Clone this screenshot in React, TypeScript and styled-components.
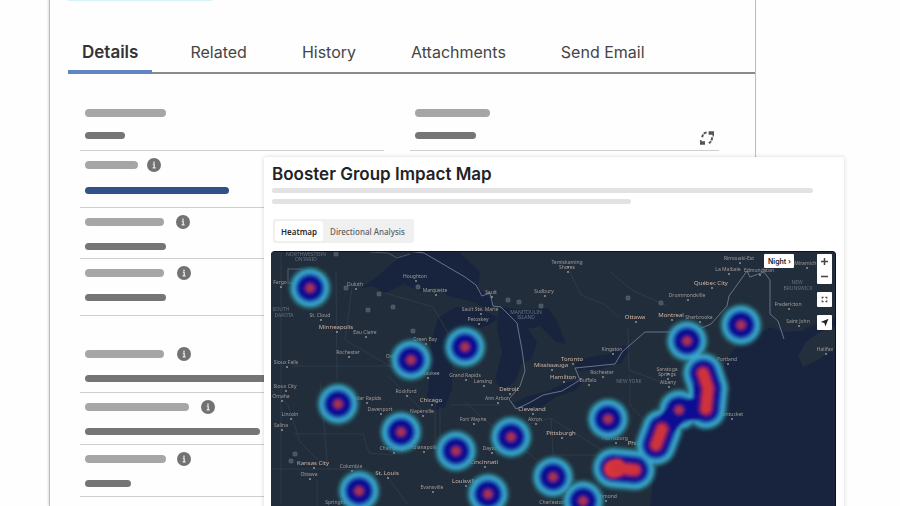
import React from "react";
import styled, { createGlobalStyle } from "styled-components";

const GlobalStyle = createGlobalStyle`
  * { box-sizing: border-box; }
  body {
    margin: 0;
    background: #fefefe;
    font-family: Inter, "Liberation Sans", sans-serif;
    color: #3a3a3c;
  }
  button, select { font-family: inherit; margin: 0; }
`;

const Stage = styled.main`
  position: relative;
  height: 100vh;
  min-height: 500px;
  overflow: hidden;
`;

const RecordCard = styled.section`
  margin: 0 144px 0 49px;
  min-height: 100%;
  background: #fefefe;
  border: solid #bdbdbd;
  border-width: 0 1px;
  box-shadow: -1px 0 2px rgba(0, 0, 0, 0.12);
`;

const RecordHeader = styled.div`
  height: 29px;
  padding-left: 18px;
`;

const HeaderAccent = styled.div`
  width: 144px;
  height: 1px;
  background: #d6f1f8;
`;

const Tabs = styled.nav`
  display: flex;
  gap: 21px;
  margin-left: 18px;
  border-bottom: 2px solid #8b8b8b;
`;

const Tab = styled.button<{ $active?: boolean }>`
  height: 45px;
  margin-bottom: -2px;
  padding: 4px ${(p) => (p.$active ? 14 : 17)}px 0;
  border: 0;
  border-bottom: 4px solid ${(p) => (p.$active ? "#5f86c2" : "transparent")};
  background: none;
  color: ${(p) => (p.$active ? "#333335" : "#454547")};
  font-size: ${(p) => (p.$active ? 17 : 16)}px;
  line-height: 24px;
  font-weight: ${(p) => (p.$active ? 600 : 400)};
  white-space: nowrap;
`;

const Columns = styled.div`
  display: grid;
  grid-template-columns: 304fr 309fr;
  gap: 26px;
  padding: 0 36px 0 30px;
`;

const Column = styled.div`
  min-width: 0;
`;

const FieldBox = styled.div<{ $top: number; $bottom: number }>`
  position: relative;
  display: flex;
  flex-direction: column;
  padding: ${(p) => p.$top}px 0 ${(p) => p.$bottom}px 5px;
  border-bottom: 1px solid #cfcfcf;
`;

const LabelRow = styled.div<{ $gap: number }>`
  display: flex;
  align-items: center;
  height: 14px;
  margin-bottom: ${(p) => p.$gap}px;
`;

const LabelBar = styled.span<{ $w: number }>`
  width: ${(p) => p.$w}px;
  height: 8px;
  border-radius: 4px;
  background: #a6a6a6;
`;

const ValueBar = styled.span<{ $w: number; $link?: boolean }>`
  width: ${(p) => p.$w}px;
  height: 7px;
  border-radius: 4px;
  background: ${(p) => (p.$link ? "#2f5389" : "#757575")};
`;

const InfoSvg = styled.svg<{ $space: number }>`
  width: 14px;
  height: 14px;
  margin-left: ${(p) => p.$space}px;
`;

const SwapSvg = styled.svg`
  position: absolute;
  right: 4px;
  bottom: 4px;
  width: 16px;
  height: 16px;
`;

const MapCard = styled.section`
  position: absolute;
  top: 157px;
  left: 264px;
  right: 56px;
  padding: 6px 8px 0 7px;
  background: #fff;
  border-radius: 3px;
  box-shadow: 0 0 4px rgba(0, 0, 0, 0.16);
`;

const MapTitle = styled.h2`
  margin: 0 0 3px;
  padding-left: 1px;
  color: #232325;
  font-size: 17px;
  line-height: 22px;
  font-weight: 600;
`;

const TextLine = styled.div<{ $w: string }>`
  width: ${(p) => p.$w};
  height: 5px;
  margin: 0 0 6px 1px;
  border-radius: 3px;
  background: #e2e2e4;
`;

const Segmented = styled.div`
  display: inline-flex;
  height: 24px;
  margin: 9px 0 8px 2px;
  padding: 2px;
  border-radius: 3px;
  background: #f0f0f1;
`;

const Segment = styled.button<{ $active?: boolean }>`
  padding: 0 ${(p) => (p.$active ? 6 : 7)}px;
  border: 0;
  border-radius: 3px;
  background: ${(p) => (p.$active ? "#fff" : "transparent")};
  color: ${(p) => (p.$active ? "#29292b" : "#5c5c60")};
  font-family: "Noto Sans", sans-serif;
  font-size: 8px;
  font-weight: ${(p) => (p.$active ? 600 : 500)};
  white-space: nowrap;
`;

const MapFrame = styled.div`
  position: relative;
  height: 360px;
  border: solid #0c121c;
  border-width: 1px 1px 0 0;
  border-radius: 4px;
  background: #222d3b;
  overflow: hidden;
`;

const MapSvg = styled.svg`
  display: block;
  width: 100%;
  height: 100%;
`;

const MapControls = styled.div`
  position: absolute;
  top: 2px;
  right: 3px;
  display: flex;
  align-items: flex-start;
  gap: 23px;
`;

const ThemeSelect = styled.select`
  appearance: none;
  width: 30px;
  height: 14px;
  padding: 0 0 0 4px;
  border: 0;
  border-radius: 1px;
  background: #fff;
  color: #222;
  font-size: 7px;
  font-weight: 600;
`;

const ControlStack = styled.div`
  display: flex;
  flex-direction: column;
  gap: 8px;
`;

const ControlGroup = styled.div`
  display: flex;
  flex-direction: column;
  border-radius: 1px;
  background: #fff;
`;

const ControlButton = styled.button`
  display: grid;
  place-items: center;
  width: 15px;
  height: 15px;
  padding: 0;
  border: 0;
  background: none;
`;

type FieldProps = {
  label: number;
  value: number;
  info?: number;
  link?: boolean;
  top?: number;
  gap?: number;
  bottom?: number;
  children?: React.ReactNode;
};

function InfoIcon({ space }: { space: number }) {
  return (
    <InfoSvg $space={space} viewBox="0 0 14 14" aria-label="Info">
      <circle cx="7" cy="7" r="7" fill="#727272" />
      <path d="M7 3.6v1.4M5.8 6.1h1.4v3.6M5.6 9.8h3" stroke="#eaeaea" strokeWidth="1.3" fill="none" />
    </InfoSvg>
  );
}

function Field({ label, value, info, link, top = 7, gap = 14, bottom = 9, children }: FieldProps) {
  return (
    <FieldBox $top={top} $bottom={bottom}>
      <LabelRow $gap={gap}>
        <LabelBar $w={label} />
        {info !== undefined && <InfoIcon space={info} />}
      </LabelRow>
      <ValueBar $w={value} $link={link} />
      {children}
    </FieldBox>
  );
}

type Place = [string, number, number, number?];

const CITIES: Place[] = [
  ["Minneapolis", 336, 329, 1], ["Kansas City", 313, 465, 1], ["Chicago", 431, 402, 1],
  ["St. Louis", 387, 475, 1], ["Louisville", 465, 483, 1], ["Cincinnati", 484, 464, 1],
  ["Cleveland", 532, 411, 1], ["Pittsburgh", 561, 435, 1], ["Toronto", 572, 361, 1],
  ["Mississauga", 551, 367, 1], ["Ottawa", 635, 319, 1], ["Montreal", 671, 317, 1],
  ["Québec City", 711, 285, 1], ["Detroit", 509, 391, 1], ["Hamilton", 563, 379, 1],
  ["Philadelphia", 645, 445, 1], ["Duluth", 355, 286], ["Houghton", 415, 278],
  ["Marquette", 435, 292], ["St. Cloud", 320, 317], ["Eau Claire", 365, 334],
  ["Rochester", 348, 354], ["Green Bay", 425, 341], ["Sioux Falls", 286, 364],
  ["Fargo", 280, 284], ["Oshkosh", 396, 358], ["Milwaukee", 427, 375],
  ["Grand Rapids", 465, 377], ["Temiskaming", 567, 264], ["Shores", 567, 269],
  ["Sudbury", 544, 293], ["Sault", 491, 294], ["Sault Ste. Marie", 480, 311],
  ["Petoskey", 478, 321], ["Kingston", 612, 351], ["Rochester", 602, 374],
  ["Rimouski-Est", 739, 260], ["La Malbaie", 728, 271], ["Edmundston", 759, 272],
  ["Drummondville", 687, 297], ["Sherbrooke", 699, 319], ["Miramichi", 806, 265],
  ["Fredericton", 788, 306], ["Saint John", 798, 323], ["Halifax", 825, 351],
  ["Portland", 727, 361], ["Saratoga", 667, 371], ["Springs", 667, 376],
  ["Sioux City", 285, 388], ["Omaha", 281, 398], ["Lincoln", 290, 416],
  ["Salina", 281, 427], ["Ottawa", 309, 476], ["Columbia", 351, 468],
  ["Springfield", 338, 504], ["Cedar Rapids", 366, 400], ["Davenport", 380, 411],
  ["Rockford", 406, 393], ["Naperville", 422, 413], ["Champaign", 393, 450],
  ["Indianapolis", 423, 449], ["Evansville", 432, 489], ["Lansing", 483, 383],
  ["Ann Arbor", 497, 400], ["Akron", 535, 421], ["Fort Wayne", 473, 421],
  ["Buffalo", 588, 382], ["Dayton", 491, 450], ["Harrisburg", 615, 440],
  ["Richmond", 605, 498], ["Charleston", 552, 504], ["Nantucket", 731, 416],
  ["Albany", 668, 384],
];

const REGIONS: Place[] = [
  ["NORTHWESTERN", 306, 256], ["ONTARIO", 306, 261], ["SOUTH", 281, 311],
  ["DAKOTA", 284, 317], ["NEW", 797, 284], ["BRUNSWICK", 798, 290],
  ["NEW YORK", 629, 383], ["MANITOULIN", 526, 314], ["ISLAND", 526, 319],
];

const SHIELDS = [
  [346, 288], [379, 294], [393, 307], [368, 310], [413, 331], [508, 300], [519, 302],
  [541, 306], [628, 298], [418, 287], [661, 303], [295, 454], [291, 461], [336, 254],
];

const SPOTS = [
  [310, 288], [411, 360], [465, 347], [338, 404], [401, 432], [456, 451], [511, 437],
  [553, 477], [583, 501], [359, 491], [488, 494], [608, 419], [687, 341], [741, 325],
  [679, 410],
];
const SPOT_PATH = SPOTS.map(([x, y]) => `M${x} ${y}h0.1`).join("");
const COAST_PATH = "M703 373L708 388L706 409M662 429L656 445M613 468L635 470";

const HALO: [string, number, number][] = [
  ["#237c8b", 43, 0.65],
  ["#3ba4c8", 37, 1],
  ["#216fb9", 30, 1],
  ["#0d1193", 25, 1],
];

function MapDrawing() {
  return (
    <MapSvg viewBox="271 252 564 360" preserveAspectRatio="xMidYMin slice" role="img" aria-label="Heatmap of group impact">
      <defs>
        <filter id="soft" x="-10%" y="-10%" width="120%" height="120%"><feGaussianBlur stdDeviation="1.4" /></filter>
        <filter id="haze"><feGaussianBlur stdDeviation="0.35" /></filter>
      </defs>
      <rect x="271" y="250" width="566" height="362" fill="#222d3b" />
      <g fill="#18243e">
        <path d="M836 318L822 321L801 331L783 332L770 327L757 336L742 341L732 351L724 365L722 379L731 389L720 399L700 408L687 423L674 439L668 461L654 470L650 506L640 612H836Z" />
        <path d="M360 289L378 276L398 258L420 251H458L480 272L478 288L494 300L490 310L470 301L448 296L438 287L421 292L404 284L386 293L372 286Z" />
        <path d="M430 376L431 343L438 318L456 307L482 310L499 318L489 325L470 331L459 345L452 362L452 389L445 407L434 411L427 397Z" />
        <path d="M499 307L529 310L548 308L558 323L566 344L556 342L540 326L528 329L537 342L532 358L521 365L515 382L502 390L495 380L502 352L497 329Z" />
        <path d="M514 403L528 396L548 391L567 382L584 380L576 390L556 397L540 408L521 410Z" />
        <path d="M574 364L586 358L610 354L625 345L630 350L621 363L600 369L580 371Z" />
      </g>
      <path d="M798 356L806 342L818 333L836 326V348L814 362L803 367Z" fill="#232f3d" />
      <g fill="none" stroke="#35414f" strokeWidth="0.7">
        <path d="M281 251V505M336 270L337 380M352 288L345 340L378 359L410 378M292 366H400M271 390L288 405L300 442L318 460M294 434H363L369 453L393 455M271 469H340L386 475L408 505M435 397V450L467 460M450 405H500M440 406V455M320 382L328 469M569 270L581 295L604 304L619 318M610 272L632 290L667 306M465 402L500 433L550 418L612 456M511 437L547 470L590 485M551 418L553 455H632M630 375V405L648 424M628 328L629 370L667 384M698 332L704 370M385 293L433 307L455 345M317 480V506M388 376L422 410" />
      </g>
      <g fill="none" stroke="#6d7c92" strokeWidth="0.9">
        <path d="M408 251L424 253L465 277L476 285L482 296L490 293L493 306L501 307L517 323L522 350L525 371L520 386L509 399L516 409L529 403L543 395L562 391L580 380L575 368L615 364L622 352L645 332H692L711 324L727 306L729 296L747 271L750 277L764 272L770 280V314L778 321L784 339" />
        <path d="M370 252L388 253L397 258L410 254" opacity="0.6" />
      </g>
      <g fontFamily="Noto Sans, sans-serif" textAnchor="middle" filter="url(#haze)">
        {CITIES.map(([name, x, y, major], i) => (
          <g key={i} fill={major ? "#cdb4a5" : "#a09a98"}>
            <text x={x} y={y} fontSize={major ? 6 : 5}>{name}</text>
            <circle cx={x + 1} cy={y + 3} r="0.8" fill="#dedad6" />
          </g>
        ))}
        {REGIONS.map(([name, x, y], i) => (
          <text key={i} x={x} y={y} fontSize="5" fill="#667180">{name}</text>
        ))}
        {SHIELDS.map(([x, y], i) => (
          <rect key={i} x={x - 2} y={y - 2} width="4" height="4" rx="1" fill="#46535f" stroke="#657382" strokeWidth="0.5" />
        ))}
      </g>
      <rect x="288" y="269" width="14" height="14" fill="none" stroke="#526170" />
      <g fill="none" strokeLinecap="round" strokeLinejoin="round" filter="url(#soft)">
        {HALO.map(([color, width, opacity]) => (
          <path key={width} d={SPOT_PATH + COAST_PATH} stroke={color} strokeWidth={width} opacity={opacity} />
        ))}
        <path d="M704 388L706 409L679 410L661 431" stroke="#0d1193" strokeWidth="22" />
        <path d={SPOT_PATH} stroke="#371582" strokeWidth="13" />
        <path d={SPOT_PATH} stroke="#a8304f" strokeWidth="8" />
        <path d={COAST_PATH} stroke="#621570" strokeWidth="16" />
        <path d={COAST_PATH} stroke="#cf323a" strokeWidth="10" />
        <path d="M613 469L617 468" stroke="#621570" strokeWidth="21" />
        <path d="M613 469L617 468" stroke="#d6353b" strokeWidth="17" />
        <path d="M617 468L635 470" stroke="#cf323a" strokeWidth="10" />
      </g>
    </MapSvg>
  );
}

export default function App() {
  return (
    <>
      <GlobalStyle />
      <Stage>
        <RecordCard>
          <RecordHeader><HeaderAccent /></RecordHeader>
          <Tabs aria-label="Record sections">
            <Tab $active aria-current="page">Details</Tab>
            <Tab>Related</Tab>
            <Tab>History</Tab>
            <Tab>Attachments</Tab>
            <Tab>Send Email</Tab>
          </Tabs>
          <Columns>
            <Column>
              <Field label={81} value={40} top={32} gap={12} bottom={11} />
              <Field label={53} value={144} info={9} link gap={15} bottom={13} />
              <Field label={79} value={81} info={12} bottom={8} />
              <Field label={79} value={81} info={13} bottom={14} />
              <Field label={79} value={200} info={13} top={31} bottom={10} />
              <Field label={104} value={175} info={12} />
              <Field label={81} value={46} info={11} />
            </Column>
            <Column>
              <Field label={75} value={61} top={32} gap={12} bottom={11}>
                <SwapSvg viewBox="0 0 16 16" fill="none" stroke="#555" aria-hidden="true">
                  <path d="M7.6 2.6C4.8 3 3.4 4.6 3 8.4" strokeWidth="2" strokeDasharray="3 1" />
                  <path d="M13.2 7.4C12.8 10.6 11.6 12.6 9 13.6" strokeWidth="2" strokeDasharray="3 1" />
                  <path d="M9.6 3H15M1 13H6" strokeWidth="3.4" />
                  <path d="M14.2 3V6.4M1.8 10V13" strokeWidth="1.4" />
                </SwapSvg>
              </Field>
            </Column>
          </Columns>
        </RecordCard>

        <MapCard>
          <MapTitle>Booster Group Impact Map</MapTitle>
          <TextLine $w="calc(100% - 24px)" />
          <TextLine $w="calc(64% - 3px)" />
          <Segmented>
            <Segment $active aria-pressed="true">Heatmap</Segment>
            <Segment aria-pressed="false">Directional Analysis</Segment>
          </Segmented>
          <MapFrame>
            <MapDrawing />
            <MapControls>
              <ThemeSelect aria-label="Map theme" defaultValue="night">
                <option value="night">Night ›</option>
              </ThemeSelect>
              <ControlStack>
                <ControlGroup>
                  <ControlButton aria-label="Zoom in">
                    <svg width="9" height="9" viewBox="0 0 9 9"><path d="M4.5 1v7M1 4.5h7" stroke="#444" strokeWidth="1.5" /></svg>
                  </ControlButton>
                  <ControlButton aria-label="Zoom out">
                    <svg width="9" height="9" viewBox="0 0 9 9"><path d="M1 4.5h7" stroke="#444" strokeWidth="1.5" /></svg>
                  </ControlButton>
                </ControlGroup>
                <ControlGroup>
                  <ControlButton aria-label="Full screen">
                    <svg width="7" height="7" viewBox="0 0 9 9"><path d="M1.5 3.5v-2h2M5.5 1.5h2v2M7.5 5.5v2h-2M3.5 7.5h-2v-2" fill="none" stroke="#444" strokeWidth="1.3" /></svg>
                  </ControlButton>
                </ControlGroup>
                <ControlGroup>
                  <ControlButton aria-label="Find my location">
                    <svg width="9" height="9" viewBox="0 0 9 9"><path d="M8.5 0.8L5.4 8.5L4.4 5L0.7 4Z" fill="#222" /></svg>
                  </ControlButton>
                </ControlGroup>
              </ControlStack>
            </MapControls>
          </MapFrame>
        </MapCard>
      </Stage>
    </>
  );
}
